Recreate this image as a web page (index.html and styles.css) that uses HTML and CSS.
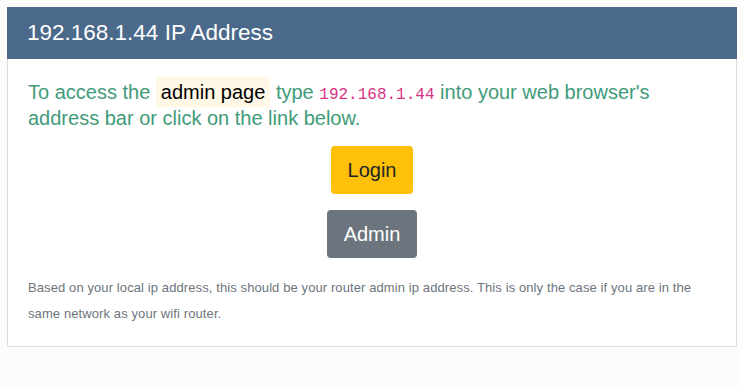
FILE: index.html
```html
<!DOCTYPE html>
<html lang="en">
<head>
    <meta charset="UTF-8">
    <meta name="viewport" content="width=device-width, initial-scale=1.0">
    <title>192.168.1.44 IP Address</title>
    <link rel="stylesheet" href="styles.css">
</head>
<body>
    <div class="ip-card">
        <h2 class="ip-card-header">192.168.1.44 IP Address</h2>
        <div class="ip-card-body">
            <p class="lead">
                To access the <span class="mark">admin page</span> type <code>192.168.1.44</code> into your web browser's address bar or click on the link below.
            </p>
            <div class="actions">
                <a href="#" class="btn btn-login">Login</a>
                <a href="#" class="btn btn-admin">Admin</a>
            </div>
            <p class="note">
                Based on your local ip address, this should be your router admin ip address. This is only the case if you are in the same network as your wifi router.
            </p>
        </div>
    </div>
</body>
</html>
```

FILE: styles.css
```css
* {
    margin: 0;
    padding: 0;
    box-sizing: border-box;
    font-family: "Liberation Sans", Arial, sans-serif;
}

body {
    background-color: #fcfcfc;
    padding: 7px 3px 7px 7px;
}

.ip-card {
    background-color: white;
    border: 1px solid #dddddd;
    border-top: none;
    width: 730px;
}

.ip-card-header {
    background-color: #4b6a8b;
    color: white;
    font-size: 22.5px;
    font-weight: normal;
    line-height: 24px;
    padding: 14px 20px;
    margin: 0 -1px;
}

.ip-card-body {
    padding: 20px 20px 19px;
}

.lead {
    color: #3f9b7a;
    font-size: 20px;
    line-height: 26px;
    margin-bottom: 15px;
}

.mark {
    background-color: #fff8e6;
    color: black;
    padding: 4px 5px;
    line-height: 1;
}

code {
    font-family: "Liberation Mono", "DejaVu Sans Mono", monospace;
    color: #d63384;
    font-size: 16px;
    line-height: 1;
}

.actions {
    display: flex;
    flex-direction: column;
    align-items: center;
    gap: 16px;
    margin-bottom: 17px;
}

.btn {
    display: inline-block;
    font-size: 20px;
    line-height: 30px;
    padding: 8px 16px;
    border: 1px solid transparent;
    border-radius: 4px;
    text-decoration: none;
}

.btn-login {
    background-color: #ffc107;
    color: #212529;
}

.btn-admin {
    background-color: #6c757d;
    color: white;
}

.note {
    color: #6c757d;
    font-size: 13px;
    letter-spacing: 0.1px;
    line-height: 26px;
}
```
